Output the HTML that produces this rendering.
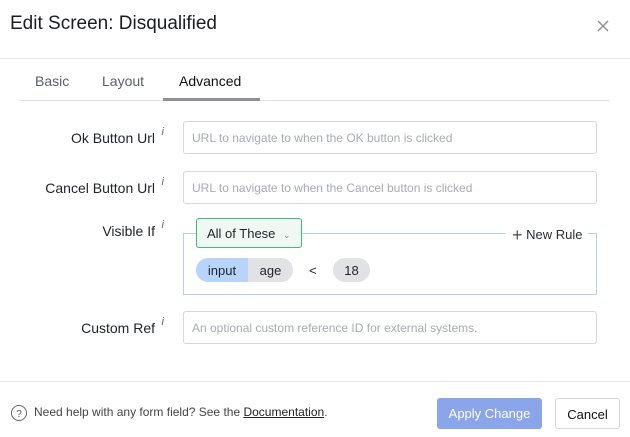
<!DOCTYPE html>
<html><head><style>
*{box-sizing:border-box;margin:0;padding:0}
body{width:630px;height:437px;background:#fff;font-family:"Liberation Sans",sans-serif;position:relative;overflow:hidden;color:#1f2328}
.a{position:absolute}
.lbl{position:absolute;right:475px;font-size:14px;color:#1f2328;white-space:nowrap}
.lbl i{position:absolute;right:-9px;top:-4px;font-size:11px;color:#666;font-style:italic}
.inp{position:absolute;left:183px;width:414px;height:33px;border:1px solid #d5d7dc;border-radius:3px;font-size:12px;color:#a7abb3;padding:9px 8px}
</style></head><body>
<div class="a" style="left:10px;top:13px;font-size:19px;color:#1c1e24">Edit Screen: Disqualified</div>
<svg class="a" style="left:596px;top:19px" width="14" height="14"><path d="M2 2L12 12M12 2L2 12" stroke="#8a8d93" stroke-width="1.4"/></svg>
<div class="a" style="left:0;top:58px;width:630px;height:1px;background:#e3e4e8"></div>
<div class="a" style="left:35px;top:73px;font-size:14px;color:#5a5e66">Basic</div>
<div class="a" style="left:102px;top:73px;font-size:14px;color:#5a5e66">Layout</div>
<div class="a" style="left:179px;top:73px;font-size:14px;color:#111">Advanced</div>
<div class="a" style="left:19px;top:100px;width:591px;height:1px;background:#e3e4e8"></div>
<div class="a" style="left:163px;top:98px;width:97px;height:3px;background:#8c909a"></div>

<div class="lbl" style="top:130px">Ok Button Url<i>i</i></div>
<div class="inp" style="top:121px">URL to navigate to when the OK button is clicked</div>
<div class="lbl" style="top:180px">Cancel Button Url<i>i</i></div>
<div class="inp" style="top:171px">URL to navigate to when the Cancel button is clicked</div>
<div class="lbl" style="top:223px">Visible If<i>i</i></div>
<div class="a" style="left:183px;top:233px;width:414px;height:62px;border:1px solid #b7cff6"></div>
<div class="a" style="left:196px;top:218px;width:106px;height:30px;border:1px solid #3dbb7d;border-radius:3px;background:#f0f8f4;font-size:13px;padding:7px 10px;color:#1f2328">All of These <span style="font-size:9px;color:#888;margin-left:4px">&#8964;</span></div>
<div class="a" style="left:506px;top:223px;height:18px;background:#fff;padding:0 6px;font-size:13px;color:#2a2d33;white-space:nowrap"><span style="font-size:18px;color:#555;position:relative;top:2px;font-weight:300">+</span> New Rule</div>
<div class="a" style="left:196px;top:258px;width:52px;height:24px;background:#b8d4fb;border-radius:12px 0 0 12px;font-size:13px;padding:5px 0;text-align:center">input</div>
<div class="a" style="left:248px;top:258px;width:45px;height:24px;background:#e1e2e6;border-radius:0 12px 12px 0;font-size:13px;padding:5px 0;text-align:center">age</div>
<div class="a" style="left:309px;top:263px;font-size:13px">&lt;</div>
<div class="a" style="left:333px;top:258px;width:37px;height:24px;background:#e1e2e6;border-radius:12px;font-size:13px;padding:5px 0;text-align:center">18</div>
<div class="lbl" style="top:320px">Custom Ref<i>i</i></div>
<div class="inp" style="top:311px">An optional custom reference ID for external systems.</div>

<div class="a" style="left:0;top:381px;width:630px;height:1px;background:#e3e4e8"></div>
<svg class="a" style="left:10px;top:404px" width="18" height="18"><circle cx="9" cy="9" r="7.5" fill="none" stroke="#666" stroke-width="1"/><text x="9" y="13" font-size="10" text-anchor="middle" fill="#555" font-family="Liberation Sans">?</text></svg>
<div class="a" style="left:34px;top:405px;font-size:12px;color:#444">Need help with any form field? See the <span style="color:#222;text-decoration:underline">Documentation</span>.</div>
<div class="a" style="left:437px;top:398px;width:105px;height:31px;background:#8aa5ea;border-radius:3px;color:#fff;font-size:13px;text-align:center;padding:8px 0">Apply Change</div>
<div class="a" style="left:555px;top:398px;width:65px;height:31px;border:1px solid #d5d7dc;border-radius:3px;color:#111;font-size:13px;text-align:center;padding:8px 0">Cancel</div>
</body></html>
